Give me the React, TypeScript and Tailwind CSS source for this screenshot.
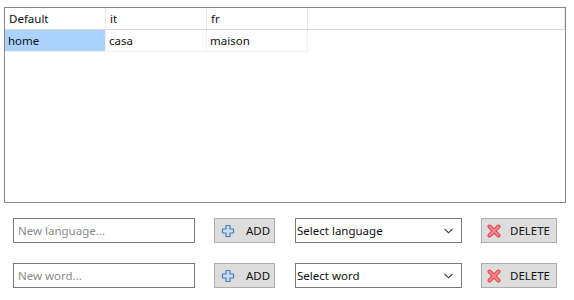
import React from "react";

const COLS = ["Default", "it", "fr"];
const ROWS = [["home", "casa", "maison"]];

function PlusIcon() {
  return (
    <svg width="14" height="14" viewBox="0 0 14 14">
      <path
        d="M5 1.5h4v3.5h3.5v4H9v3.5H5V9H1.5V5H5z"
        fill="#c9dcf5"
        stroke="#4a7cc0"
        strokeWidth="1.2"
        strokeLinejoin="round"
      />
    </svg>
  );
}

function XIcon() {
  return (
    <svg width="14" height="14" viewBox="0 0 14 14">
      <path d="M2.5 2.5l9 9M11.5 2.5l-9 9" stroke="#e0424c" strokeWidth="4" strokeLinecap="round" />
      <path d="M2.5 2.5l9 9M11.5 2.5l-9 9" stroke="#f6868b" strokeWidth="2" strokeLinecap="round" />
    </svg>
  );
}

function Chevron() {
  return (
    <svg width="9" height="6" viewBox="0 0 9 6" className="shrink-0">
      <path d="M0.5 0.8l4 4 4-4" fill="none" stroke="#333" strokeWidth="1.1" />
    </svg>
  );
}

function ControlRow({ placeholder, select }: { placeholder: string; select: string }) {
  return (
    <div className="flex h-[25px] items-center">
      <div className="ml-[13px] flex h-[25px] w-[182px] items-center border border-[#7a7a7a] px-[4px] text-[#8a8a8a]">
        {placeholder}
      </div>
      <button className="ml-[19px] flex h-[25px] w-[61px] items-center gap-[11px] border border-[#adadad] bg-[#dddddd] pl-[6px] text-[#111]">
        <PlusIcon />
        ADD
      </button>
      <div className="ml-[20px] flex h-[25px] w-[167px] items-center justify-between border border-[#7a7a7a] pl-[1px] pr-[8px] text-[#111]">
        {select}
        <Chevron />
      </div>
      <button className="ml-[19px] flex h-[25px] w-[76px] items-center gap-[9px] border border-[#adadad] bg-[#dddddd] pl-[5px] text-[#111]">
        <XIcon />
        DELETE
      </button>
    </div>
  );
}

export default function App() {
  return (
    <div className="h-[300px] w-[574px] bg-white pl-[4px] pt-[7px] text-[11.5px] leading-none" style={{ fontFamily: '"Noto Sans", "Open Sans", sans-serif' }}>
      <div className="h-[196px] w-[562px] border border-[#828790] bg-white">
        <div className="flex h-[22px] border-b border-[#d5d5d5]">
          {COLS.map((c) => (
            <div key={c} className="flex w-[101px] items-center border-r border-[#e8e8e8] pl-[4px] pt-[1px] text-[#111]">
              {c}
            </div>
          ))}
          <div className="flex-1 border-r border-[#e8e8e8]" />
        </div>
        {ROWS.map((r) => (
          <div key={r[0]} className="flex h-[22px]">
            {r.map((v, i) => (
              <div
                key={v}
                className={
                  i === 0
                    ? "flex w-[101px] items-center border-b border-r border-[#f0f0f0] bg-[#aad4ff] pl-[3px] pt-[1px] text-[#111]"
                    : "flex w-[101px] items-center border-b border-r border-[#f0f0f0] pl-[3px] pt-[1px] text-[#111]"
                }
              >
                {v}
              </div>
            ))}
          </div>
        ))}
      </div>
      <div className="mt-[15px] -ml-[4px] flex flex-col gap-[20px]">
        <ControlRow placeholder="New language..." select="Select language" />
        <ControlRow placeholder="New word..." select="Select word" />
      </div>
    </div>
  );
}
